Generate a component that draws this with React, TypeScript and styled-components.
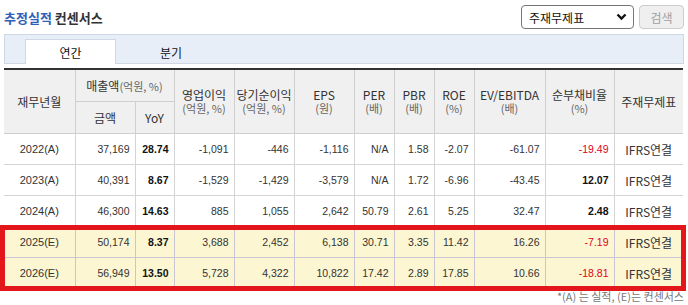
import React from "react";
import styled, { createGlobalStyle } from "styled-components";

const GlobalStyle = createGlobalStyle`
  body {
    margin: 0;
    background: #fff;
    font-family: "Noto Sans CJK KR", "Liberation Sans", sans-serif;
    color: #333;
  }
`;

type Row = {
  year: string;
  sales: string;
  yoy: string;
  op: string;
  net: string;
  eps: string;
  per: string;
  pbr: string;
  roe: string;
  ev: string;
  debt: string;
  est?: boolean;
};

const rows: Row[] = [
  { year: "2022(A)", sales: "37,169", yoy: "28.74", op: "-1,091", net: "-446", eps: "-1,116", per: "N/A", pbr: "1.58", roe: "-2.07", ev: "-61.07", debt: "-19.49" },
  { year: "2023(A)", sales: "40,391", yoy: "8.67", op: "-1,529", net: "-1,429", eps: "-3,579", per: "N/A", pbr: "1.72", roe: "-6.96", ev: "-43.45", debt: "12.07" },
  { year: "2024(A)", sales: "46,300", yoy: "14.63", op: "885", net: "1,055", eps: "2,642", per: "50.79", pbr: "2.61", roe: "5.25", ev: "32.47", debt: "2.48" },
  { year: "2025(E)", sales: "50,174", yoy: "8.37", op: "3,688", net: "2,452", eps: "6,138", per: "30.71", pbr: "3.35", roe: "11.42", ev: "16.26", debt: "-7.19", est: true },
  { year: "2026(E)", sales: "56,949", yoy: "13.50", op: "5,728", net: "4,322", eps: "10,822", per: "17.42", pbr: "2.89", roe: "17.85", ev: "10.66", debt: "-18.81", est: true },
];

const colWidths = [71, 60, 39, 60, 60, 60, 40, 40, 40, 71, 69, 69];

export default function App() {
  return (
    <>
      <GlobalStyle />
      <Page>
        <TopBar>
          <Title>
            <Accent>추정실적</Accent> 컨센서스
          </Title>
          <Controls>
            <SelectBox>
              <span>주재무제표</span>
              <svg width="11" height="8" viewBox="0 0 11 8">
                <path d="M1.5 1.5 L5.5 5.5 L9.5 1.5" fill="none" stroke="#111" strokeWidth="2.4" />
              </svg>
            </SelectBox>
            <SearchBtn disabled>검색</SearchBtn>
          </Controls>
        </TopBar>

        <TabBar>
          <Tab $active>연간</Tab>
          <Tab>분기</Tab>
        </TabBar>

        <TableWrap>
          <Table>
            <colgroup>
              {colWidths.map((w, i) => (
                <col key={i} style={{ width: w }} />
              ))}
            </colgroup>
            <thead>
              <tr>
                <Th rowSpan={2}>재무년월</Th>
                <Th colSpan={2} $short>
                  매출액<Unit>(억원, %)</Unit>
                </Th>
                <Th rowSpan={2}>영업이익<Sub>(억원, %)</Sub></Th>
                <Th rowSpan={2}>당기순이익<Sub>(억원, %)</Sub></Th>
                <Th rowSpan={2}>EPS<Sub>(원)</Sub></Th>
                <Th rowSpan={2}>PER<Sub>(배)</Sub></Th>
                <Th rowSpan={2}>PBR<Sub>(배)</Sub></Th>
                <Th rowSpan={2}>ROE<Sub>(%)</Sub></Th>
                <Th rowSpan={2}>EV/EBITDA<Sub>(배)</Sub></Th>
                <Th rowSpan={2}>순부채비율<Sub>(%)</Sub></Th>
                <Th rowSpan={2}>주재무제표</Th>
              </tr>
              <tr>
                <Th $short>금액</Th>
                <Th $short>YoY</Th>
              </tr>
            </thead>
            <tbody>
              {rows.map((r) => (
                <Tr key={r.year} $est={r.est}>
                  <Year>{r.year}</Year>
                  <Num>{r.sales}</Num>
                  <Num $bold>{r.yoy}</Num>
                  <Num>{r.op}</Num>
                  <Num>{r.net}</Num>
                  <Num>{r.eps}</Num>
                  <Num>{r.per}</Num>
                  <Num>{r.pbr}</Num>
                  <Num>{r.roe}</Num>
                  <Num>{r.ev}</Num>
                  <Num $bold={!r.debt.startsWith("-")} $red={r.debt.startsWith("-")}>
                    {r.debt}
                  </Num>
                  <Basis>IFRS연결</Basis>
                </Tr>
              ))}
            </tbody>
          </Table>
          <Highlight />
        </TableWrap>

        <Note>*(A) 는 실적, (E)는 컨센서스</Note>
      </Page>
    </>
  );
}

const Page = styled.div`
  width: 680px;
  padding: 4px 5px 0 4px;
`;

const TopBar = styled.div`
  display: flex;
  align-items: center;
  justify-content: space-between;
  height: 26px;
`;

const Title = styled.h2`
  margin: 0;
  font-size: 13px;
  font-weight: 700;
  color: #333;
`;

const Accent = styled.span`
  color: #2f5fb8;
`;

const Controls = styled.div`
  display: flex;
  align-items: center;
  gap: 5px;
`;

const SelectBox = styled.div`
  box-sizing: border-box;
  width: 113px;
  height: 24px;
  border: 1px solid #767676;
  border-radius: 4px;
  display: flex;
  align-items: center;
  justify-content: space-between;
  padding: 0 6px 0 7px;
  font-size: 12px;
  color: #111;
  background: #fff;
`;

const SearchBtn = styled.button`
  box-sizing: border-box;
  width: 45px;
  height: 24px;
  border: 1px solid #ccc;
  border-radius: 4px;
  background: #efefef;
  color: #a0a0a0;
  font-family: "Noto Sans CJK KR", sans-serif;
  font-size: 12px;
  padding: 0;
`;

const TabBar = styled.div`
  box-sizing: border-box;
  margin-top: 4px;
  height: 30px;
  background: #e8eef8;
  border: 1px solid #d0d8e6;
  display: flex;
  align-items: flex-end;
  padding-left: 20px;
`;

const Tab = styled.div<{ $active?: boolean }>`
  box-sizing: border-box;
  width: ${(p) => (p.$active ? "91px" : "110px")};
  height: 25px;
  margin-bottom: -1px;
  display: flex;
  align-items: center;
  justify-content: center;
  font-size: 12px;
  color: #111;
  background: ${(p) => (p.$active ? "#fff" : "transparent")};
  border: 1px solid ${(p) => (p.$active ? "#d0d8e6" : "transparent")};
  border-bottom: none;
`;

const TableWrap = styled.div`
  position: relative;
  margin-top: 4px;
`;

const Table = styled.table`
  width: 679px;
  table-layout: fixed;
  border-collapse: collapse;
  border-top: 2px solid #333;
`;

const Th = styled.th<{ $short?: boolean }>`
  height: ${(p) => (p.$short ? "31px" : "auto")};
  padding: 0;
  background: #f0f0f0;
  border: 1px solid #cfcfcf;
  border-top: none;
  font-size: 12px;
  font-weight: 400;
  color: #333;
  line-height: 14px;
  text-align: center;
  white-space: nowrap;
  &:first-child {
    border-left: none;
  }
  &:last-child {
    border-right: none;
  }
`;

const Unit = styled.span`
  font-size: 11px;
  color: #666;
`;

const Sub = styled.span`
  display: block;
  font-size: 11px;
  line-height: 13px;
  color: #666;
`;

const Tr = styled.tr<{ $est?: boolean }>`
  height: 31px;
  background: ${(p) => (p.$est ? "#fcf6d2" : "#fff")};
  td {
    border: 1px solid ${(p) => (p.$est ? "#c9c5d3" : "#d4d4d4")};
  }
  td:first-child {
    border-left: none;
  }
  td:last-child {
    border-right: none;
  }
`;

const Year = styled.td`
  padding: 0;
  text-align: center;
  font-family: "Liberation Sans", sans-serif;
  font-size: 11px;
  color: #333;
`;

const Num = styled.td<{ $bold?: boolean; $red?: boolean }>`
  padding: 0 5px 0 0;
  text-align: right;
  font-family: "Liberation Sans", sans-serif;
  font-size: 10.5px;
  font-weight: ${(p) => (p.$bold ? 700 : 400)};
  color: ${(p) => (p.$red ? "#e0001a" : p.$bold ? "#111" : "#333")};
`;

const Basis = styled.td`
  padding: 0;
  text-align: center;
  font-size: 12px;
  color: #333;
`;

const Highlight = styled.div`
  position: absolute;
  left: -4px;
  right: -2px;
  top: 157px;
  height: 66px;
  box-sizing: border-box;
  border: 5px solid #e3161b;
  pointer-events: none;
`;

const Note = styled.div`
  margin-top: 1px;
  text-align: right;
  font-size: 11px;
  color: #777;
  line-height: 13px;
`;
